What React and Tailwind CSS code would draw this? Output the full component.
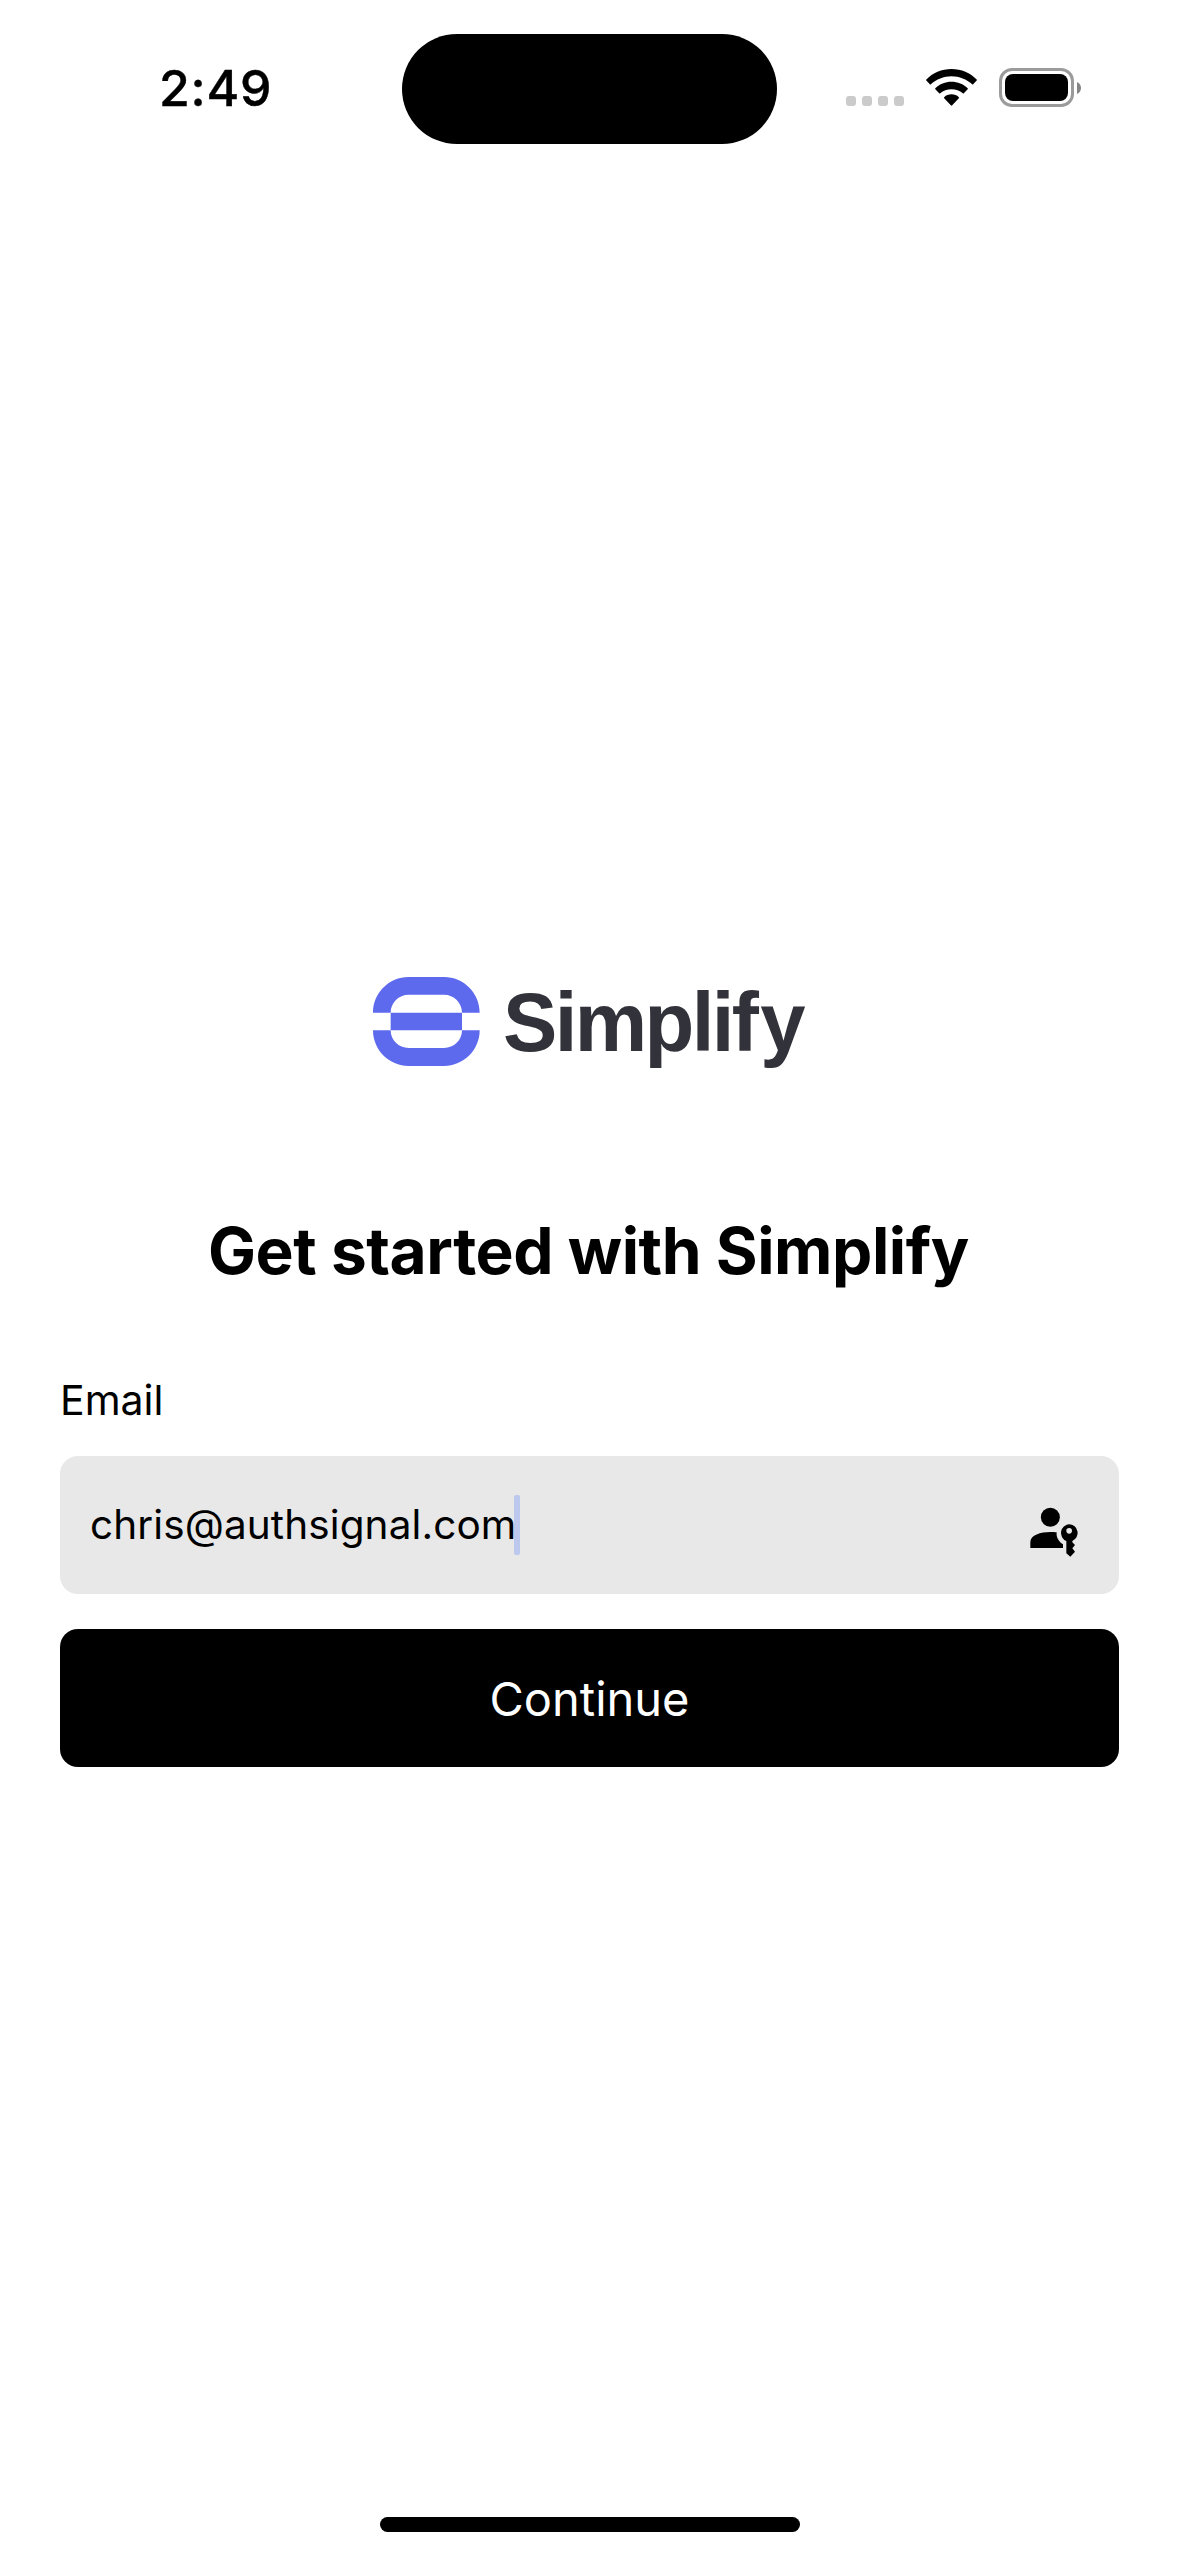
import React from "react";

function CellularDots() {
  return (
    <div className="mt-[38px] flex gap-1.5">
      {[0, 1, 2, 3].map((i) => (
        <span key={i} className="size-2.5 rounded-[3px] bg-[#cbcbcb]" />
      ))}
    </div>
  );
}

function WifiIcon() {
  return (
    <svg className="ml-[22px] mt-[11px] h-[37px] w-[51px]" viewBox="0 0 153 111" fill="black">
      <path d="M76.500 0C106 0 133 12 152 31.500Q153.500 33 152 34.500L141.500 46Q140 47.500 138.500 46C122 31 100 22 76.500 22C53 22 31 31 14.500 46Q13 47.500 11.500 46L1 34.500Q-0.500 33 1 31.500C20 12 47 0 76.500 0Z" />
      <path d="M76.500 38C95 38 112 45 125 57.500Q126.500 59 125 60.500L113.500 73Q112 74.500 110.500 73C101 65 89.500 61 76.500 61C63.500 61 52 65 42.500 73Q41 74.500 39.500 73L28 60.500Q26.500 59 28 57.500C41 45 58 38 76.500 38Z" />
      <path d="M76.500 76C85 76 92.500 79 98.500 84.500Q100 86 98.500 87.500L78.500 109Q76.500 111 74.500 109L54.500 87.500Q53 86 54.500 84.500C60.500 79 68 76 76.500 76Z" />
    </svg>
  );
}

function BatteryIcon() {
  return (
    <div className="ml-[22px] mt-2.5 flex items-center gap-[3px]">
      <div className="h-[39px] w-[75px] rounded-[13px] border-[3px] border-[#9b9b9b] p-[3px]">
        <div className="h-full rounded-[8px] bg-black" />
      </div>
      <svg className="h-3 w-1" viewBox="0 0 4 12" fill="#858585">
        <path d="M0 0C2.400 1 4 3.300 4 6S2.400 11 0 12Z" />
      </svg>
    </div>
  );
}

function StatusBar() {
  return (
    <header className="flex h-[144px] w-full items-start">
      <div className="mt-[58px] w-[243px] shrink-0 pl-[27px] ml-[132px] text-[50px] font-medium leading-[60px] tracking-[0.740px] [-webkit-text-stroke:0.4px_black]">
        2:49
      </div>
      <div className="ml-[27px] mt-[33.500px] h-[110.500px] w-[375px] shrink-0 rounded-full bg-black" />
      <div className="ml-[69px] mt-[58px] flex items-start">
        <CellularDots />
        <WifiIcon />
        <BatteryIcon />
      </div>
    </header>
  );
}

function Logo() {
  return (
    <div className="flex h-[89px] items-start pl-[373px]">
      <svg className="h-[89px] w-[107px]" viewBox="0 0 321 267" fill="#5d6aee">
        <path d="M0 107C0 48 48 0 107 0H213C272 0 320 48 320 107H267C267 77 243 53 213 53H107C77 53 53 77 53 107Z" />
        <path d="M53 107H267V160H53Z" />
        <path d="M0 160H53C53 190 77 213 107 213H213C243 213 267 190 267 160H320C320 219 272 267 213 267H107C48 267 0 219 0 160Z" />
      </svg>
      <span className="ml-[23px] mt-px origin-left scale-x-[0.970] whitespace-nowrap font-['Liberation_Sans',Arial,sans-serif] text-[84px] font-bold leading-[88px] tracking-[-2.700px] text-[#32323a]">
        Simplif<span className="ml-[4px]">y</span>
      </span>
    </div>
  );
}

function PasskeyIcon() {
  return (
    <svg className="mt-11 h-16 w-[60px] self-start" viewBox="0 0 180 192" fill="black">
      <circle cx="79" cy="52" r="28.500" />
      <path d="M19 144V127C19 105 50 96 79 96C87 96 92 96 98 97C96 112 104 125 117 133V144Z" />
      <path
        fillRule="evenodd"
        d="M135.500 73A26 26 0 0 1 145 123V127L153 135L145 145L153 155L139 170L127 160V123A26 26 0 0 1 135.500 73ZM135.500 84A8.500 8.500 0 1 0 135.500 101A8.500 8.500 0 1 0 135.500 84Z"
      />
    </svg>
  );
}

export default function App() {
  return (
    <div className="flex h-[2556px] w-[1179px] flex-col overflow-hidden bg-white font-[Inter,sans-serif] text-black">
      <StatusBar />
      <main className="mt-[833px] flex flex-col">
        <Logo />
        <h1 className="mt-[145px] whitespace-nowrap pl-[208px] text-[64px] font-bold leading-[80px] tracking-[-0.460px]">
          Get started with Simplify
        </h1>
        <form className="mx-[60px] mt-[85px] flex flex-col">
          <label className="text-[41px] leading-[48px]">Email</label>
          <div className="mt-[32px] flex h-[138px] items-center rounded-[18px] bg-[#e8e8e8] pl-[30px] pr-[35px]">
            <span className="text-[40.500px] leading-[48px] tracking-[0.110px]">chris@authsignal.com</span>
            <span className="-ml-[2px] h-[60px] w-1.5 rounded-[2px] bg-[#bcc8ee]" />
            <span className="grow" />
            <PasskeyIcon />
          </div>
          <button
            type="button"
            className="mt-[35px] h-[138px] rounded-[18px] bg-black pt-0.5 text-[47px] leading-[56px] text-white"
          >
            Continue
          </button>
        </form>
      </main>
      <div className="mb-6 mt-auto h-[15px] w-[420px] self-center rounded-full bg-black" />
    </div>
  );
}
